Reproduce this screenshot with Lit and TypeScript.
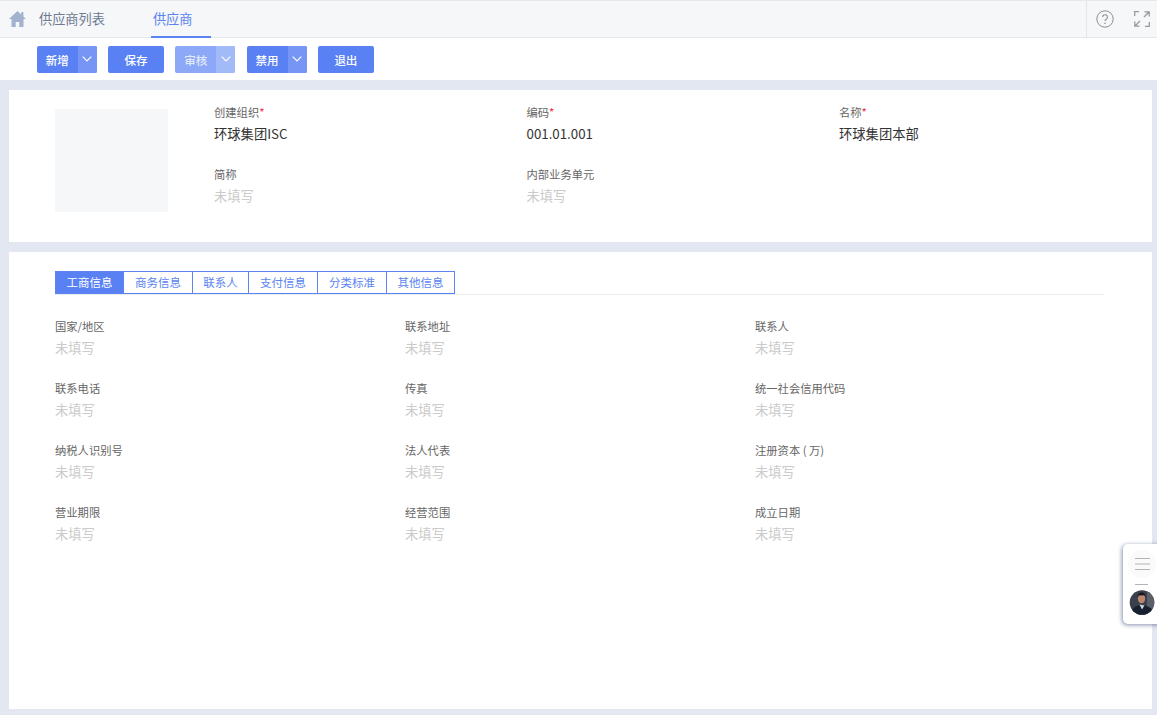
import { LitElement, html, css, svg } from 'lit'
import { customElement } from 'lit/decorators.js'

const EMPTY = '未填写'

const detailFields = [
  '国家/地区', '联系地址', '联系人',
  '联系电话', '传真', '统一社会信用代码',
  '纳税人识别号', '法人代表', '注册资本 ( 万)',
  '营业期限', '经营范围', '成立日期'
]

const tabs = ['工商信息', '商务信息', '联系人', '支付信息', '分类标准', '其他信息']

const chevron = svg`<svg width="10" height="6" viewBox="0 0 10 6"><path d="M.7.7 5 5 9.3.7" fill="none" stroke="#fff" stroke-width="1.1"/></svg>`

@customElement('app-root')
export class AppRoot extends LitElement {
  static styles = css`
    * {
      box-sizing: border-box;
    }
    :host {
      display: flex;
      flex-direction: column;
      position: relative;
      height: 715px;
      overflow: hidden;
      background: #e3e7f1;
      font-family: "Noto Sans CJK SC", "Liberation Sans", sans-serif;
      color: #666;
    }
    .topbar {
      display: flex;
      align-items: stretch;
      height: 38px;
      background: #f6f7f9;
      border-top: 1px solid #e6e8ec;
      border-bottom: 1px solid #e4e6ea;
    }
    .home {
      margin: 10px 0 0 9px;
      width: 17px;
      height: 16px;
    }
    .crumb {
      margin-left: 13px;
      padding-top: 8px;
      font-size: 13.2px;
      line-height: 20px;
      color: #6d7a92;
    }
    .crumb.active {
      margin-left: 46px;
      width: 60px;
      padding-left: 2px;
      color: #5b84f0;
      border-bottom: 2px solid #5b84f0;
      height: 37px;
      margin-bottom: -1px;
    }
    .top-actions {
      margin-left: auto;
      width: 71px;
      border-left: 1px solid #e4e6ea;
      display: flex;
      align-items: center;
      gap: 20px;
      padding: 0 0 0 9px;
    }
    .toolbar {
      display: flex;
      gap: 11.3px;
      align-items: center;
      height: 42px;
      padding: 0 0 0 36.7px;
      background: #fff;
    }
    .btn {
      display: flex;
      height: 27px;
      border-radius: 2px;
      overflow: hidden;
      color: #fff;
      font-size: 11.5px;
      font-weight: 500;
      background: #5981f3;
    }
    .btn.dim {
      background: #8ca8f6;
      color: #e2e9fc;
    }
    .btn .label {
      display: flex;
      align-items: center;
      justify-content: center;
      padding-top: 1px;
      width: 41px;
    }
    .btn.wide .label {
      width: 56px;
    }
    .btn .more {
      display: flex;
      align-items: center;
      justify-content: center;
      width: 19px;
      background: #7795f5;
    }
    .btn.dim .more {
      background: #a3baf8;
    }
    .card {
      background: #fff;
      margin: 0 5px 0 9px;
    }
    .head {
      display: flex;
      height: 152px;
      margin-top: 10px;
      padding: 13.5px 0 0 46px;
    }
    .logo {
      width: 113px;
      height: 103px;
      margin-top: 5.5px;
      background: #f6f7f9;
    }
    .head-grid {
      margin-left: 46px;
      display: grid;
      grid-template-columns: 312.5px 312.5px 1fr;
      grid-auto-rows: 62px;
      flex: 1;
    }
    .field .name {
      font-size: 11.3px;
      line-height: 17px;
      color: #666;
    }
    .field .name i {
      color: #f0303c;
      font-style: normal;
    }
    .field .val {
      margin-top: 3px;
      font-size: 13.3px;
      line-height: 20px;
      color: #333;
    }
    .field .val.empty {
      color: #cbcbcb;
    }
    .body {
      flex: 1;
      margin-top: 10px;
      margin-bottom: 6px;
      padding: 19px 48px 0 46px;
    }
    .tabs {
      display: grid;
      grid-template-columns: 69px 69px 56px 69px 69px 68px;
      justify-content: start;
      border-bottom: 1px solid #e9ebef;
      height: 24px;
    }
    .tab {
      height: 23px;
      padding-top: 1px;
      border: 1px solid #5b84f0;
      border-left: 0;
      font-size: 11.5px;
      line-height: 18px;
      text-align: center;
      color: #5b84f0;
      background: #fff;
    }
    .tab:first-child {
      border-left: 1px solid #5b84f0;
    }
    .tab.on {
      background: #5981f3;
      color: #fff;
    }
    .detail-grid {
      display: grid;
      grid-template-columns: repeat(3, 350px);
      grid-auto-rows: 62.2px;
      padding-top: 22.5px;
    }
    .float {
      position: absolute;
      left: 1123px;
      top: 544px;
      width: 44px;
      height: 80px;
      background: #fff;
      border-radius: 5px;
      box-shadow: -1px 1px 4px rgba(70, 85, 130, .65);
    }
    .float svg {
      position: absolute;
      left: 0;
      top: 0;
    }
  `

  private field(name: string, value = EMPTY, required = false) {
    return html`
      <div class="field">
        <div class="name">${name}${required ? html`<i>*</i>` : ''}</div>
        <div class="val ${value === EMPTY ? 'empty' : ''}">${value}</div>
      </div>
    `
  }

  render() {
    return html`
      <div class="topbar">
        <svg class="home" viewBox="0 0 17 16"><path d="M8.5 0 0 8h2.5v8h4.2v-5h3.6v5h4.2V8H17l-2.6-2.5V1h-2.2v2.400z" fill="#a3b2cd"/></svg>
        <div class="crumb">供应商列表</div>
        <div class="crumb active">供应商</div>
        <div class="top-actions">
          <svg width="18" height="18" viewBox="0 0 18 18"><circle cx="9" cy="9" r="8.200" fill="none" stroke="#8f8f8f" stroke-width="1"/><path d="M6.600 7.100a2.400 2.400 0 1 1 3.600 2.100c-.8.500-1.200 1-1.200 1.900" fill="none" stroke="#8f8f8f" stroke-width="1.100"/><circle cx="9" cy="13.200" r=".8" fill="#8f8f8f"/></svg>
          <svg width="16" height="16" viewBox="0 0 16 16" fill="none" stroke="#9a9a9a" stroke-width="1.300"><path d="M.7 5V.7H5M10.500.8h4.700v4.700M15 1 10 6M.8 10.500v4.700h4.700M1 15l5-5M15.300 11v4.300H11"/></svg>
        </div>
      </div>
      <div class="toolbar">
        <div class="btn"><span class="label">新增</span><span class="more">${chevron}</span></div>
        <div class="btn wide"><span class="label">保存</span></div>
        <div class="btn dim"><span class="label">审核</span><span class="more">${chevron}</span></div>
        <div class="btn"><span class="label">禁用</span><span class="more">${chevron}</span></div>
        <div class="btn wide"><span class="label">退出</span></div>
      </div>
      <div class="card head">
        <div class="logo"></div>
        <div class="head-grid">
          ${this.field('创建组织', '环球集团ISC', true)}
          ${this.field('编码', '001.01.001', true)}
          ${this.field('名称', '环球集团本部', true)}
          ${this.field('简称')}
          ${this.field('内部业务单元')}
        </div>
      </div>
      <div class="card body">
        <div class="tabs">
          ${tabs.map((t, i) => html`<div class="tab ${i === 0 ? 'on' : ''}">${t}</div>`)}
        </div>
        <div class="detail-grid">
          ${detailFields.map(f => this.field(f))}
        </div>
      </div>
      <div class="float">
        <svg width="34" height="80" viewBox="0 0 34 80">
          <defs><clipPath id="av"><circle cx="19" cy="58.500" r="12.300"/></clipPath></defs>
          <circle cx="19" cy="20" r="14" fill="#fafafa"/>
          <path d="M12 14.500h15M12 20h15M12 25.500h15M12 40.500h13" stroke="#b4b4b4" stroke-width="1" fill="none"/>
          <g clip-path="url(#av)">
            <rect x="6" y="46" width="26" height="26" fill="#3a3f4c"/>
            <path d="M24 46h8v26h-8z" fill="#5b5f6a"/>
            <path d="M8 72c0-7 3-9 6-10l3-1h4l5 2c3 1 4 4 4 9z" fill="#16202f"/>
            <path d="M16.500 60.500l2.500 5 2.500-4z" fill="#cfd3da"/>
            <ellipse cx="18.500" cy="54.500" rx="3.700" ry="4.800" fill="#b98670"/>
            <path d="M14.600 54c-.4-4 2-5.400 4.200-5.400s4 1.500 3.500 5l-.8-2.300-5.800.2z" fill="#191a20"/>
          </g>
        </svg>
      </div>
    `
  }
}
